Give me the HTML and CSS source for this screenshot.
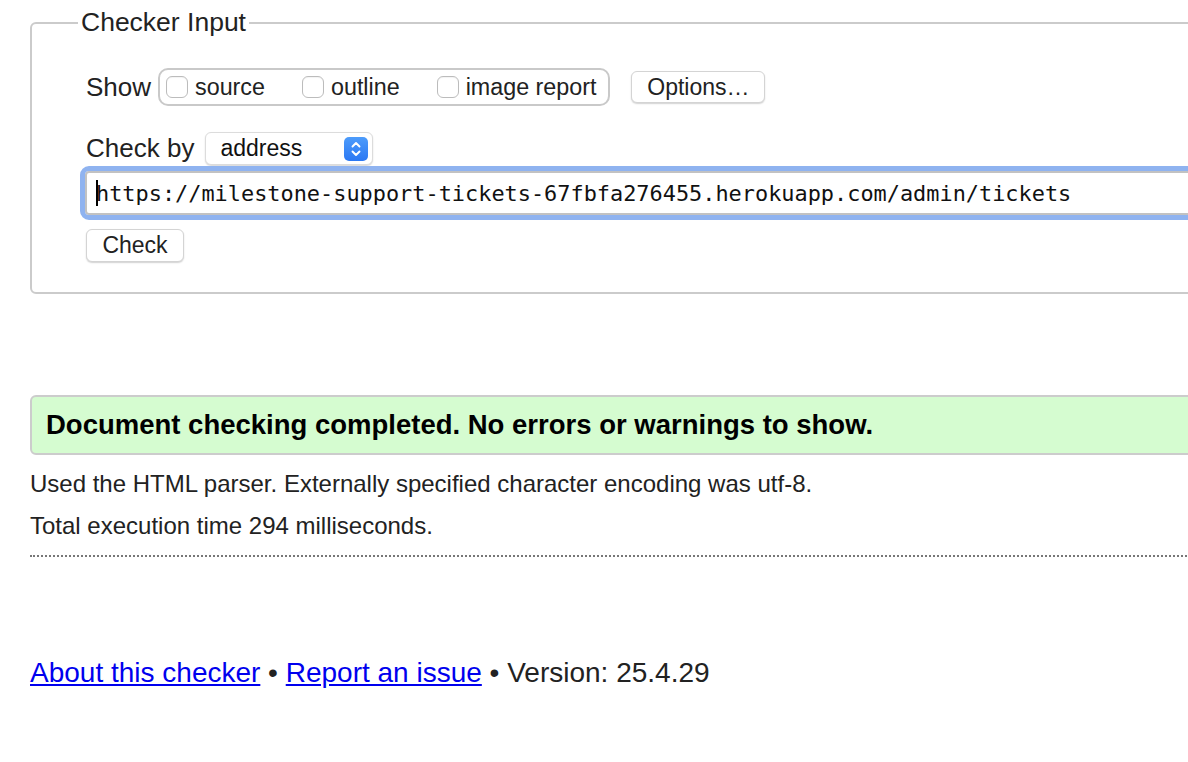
FILE: index.html
```html
<!DOCTYPE html>
<html lang="en">
<head>
<meta charset="utf-8">
<title>Nu Html Checker</title>
<link rel="stylesheet" href="styles.css">
</head>
<body>
<div class="page">
  <fieldset class="checker">
    <legend>Checker Input</legend>
    <div class="row show-row">
      <span class="label show-label">Show</span>
      <div class="opts">
        <label class="opt"><span class="box"></span>source</label>
        <label class="opt"><span class="box"></span>outline</label>
        <label class="opt"><span class="box"></span>image report</label>
      </div>
      <button class="btn options">Options…</button>
    </div>
    <div class="row checkby-row">
      <span class="label checkby-label">Check by</span>
      <div class="select">
        <span class="select-text">address</span>
        <svg class="stepper" width="24" height="24" viewBox="0 0 24 24">
          <defs>
            <linearGradient id="sg" x1="0" y1="0" x2="0" y2="1">
              <stop offset="0" stop-color="#4d9cfb"/>
              <stop offset="1" stop-color="#2b78f3"/>
            </linearGradient>
          </defs>
          <rect x="0" y="0" width="24" height="24" rx="5" fill="url(#sg)"/>
          <path d="M8.5 9.5 L12 6 L15.5 9.5" fill="none" stroke="#fff" stroke-width="1.9" stroke-linecap="round" stroke-linejoin="round"/>
          <path d="M8.5 14.5 L12 18 L15.5 14.5" fill="none" stroke="#fff" stroke-width="1.9" stroke-linecap="round" stroke-linejoin="round"/>
        </svg>
      </div>
    </div>
    <div class="url"><span class="caret"></span>https://milestone-support-tickets-67fbfa276455.herokuapp.com/admin/tickets</div>
    <button class="btn check">Check</button>
  </fieldset>

  <div class="success">Document checking completed. No errors or warnings to show.</div>
  <p class="info">Used the HTML parser. Externally specified character encoding was utf-8.</p>
  <p class="info">Total execution time 294 milliseconds.</p>
  <hr class="sep">

  <div class="footer"><a href="#">About this checker</a> • <a href="#">Report an issue</a> • Version: 25.4.29</div>
</div>
</body>
</html>
```
FILE: styles.css
```css
html, body {
  margin: 0;
  padding: 0;
  overflow: hidden;
  background: #fff;
}

body {
  font-family: "Liberation Sans", Arial, Helvetica, sans-serif;
  color: #222;
}

.page {
  width: 1300px;
  padding: 7px 0 0 30px;
}

.checker {
  margin: 0;
  border: 2px solid #cbcbcb;
  border-radius: 6px;
  padding: 0 0 30px 54px;
  min-width: 0;
}

.checker legend {
  font-size: 26.5px;
  padding: 0 3px;
  margin-left: -8px;
  color: #222;
}

.row {
  display: flex;
  align-items: center;
}

.label {
  font-size: 26px;
  color: #222;
}

.show-row {
  margin-top: 30px;
  height: 38px;
}

.show-label {
  margin-right: 7px;
}

.opts {
  display: flex;
  align-items: center;
  gap: 37px;
  height: 38px;
  box-sizing: border-box;
  border: 2px solid #c9c9c9;
  border-radius: 10px;
  padding: 0 12px 0 6px;
}

.opt {
  display: flex;
  align-items: center;
  font-size: 23.3px;
  color: #222;
}

.box {
  width: 22px;
  height: 22px;
  box-sizing: border-box;
  border: 1px solid #bcbcbc;
  border-radius: 6px;
  background: #fff;
  margin-right: 7px;
  box-shadow: inset 0 1px 1px rgba(0, 0, 0, 0.05);
}

.btn {
  font-family: "Liberation Sans", Arial, Helvetica, sans-serif;
  font-size: 23px;
  color: #222;
  background: #fff;
  border: 1px solid #d4d4d4;
  border-radius: 6px;
  box-shadow: 0 1px 1.5px rgba(0, 0, 0, 0.18);
  padding: 0;
  display: flex;
  align-items: center;
  justify-content: center;
  box-sizing: border-box;
}

.options {
  margin-left: 21px;
  width: 134px;
  height: 32px;
}

.checkby-row {
  margin-top: 26px;
  height: 33px;
}

.checkby-label {
  margin-right: 11px;
}

.select {
  width: 168px;
  height: 33px;
  box-sizing: border-box;
  display: flex;
  align-items: center;
  justify-content: space-between;
  padding: 0 4px 0 14px;
  background: #fff;
  border: 1px solid #dcdcdc;
  border-radius: 6px;
  box-shadow: 0 1px 1.5px rgba(0, 0, 0, 0.16);
}

.select-text {
  font-size: 23px;
  color: #111;
}

.stepper {
  display: block;
}

.url {
  margin-top: 6px;
  margin-left: -1px;
  width: 1150px;
  height: 44px;
  box-sizing: border-box;
  border: 2px solid #c2c2c2;
  border-radius: 4px;
  outline: 5px solid #8fb3f0;
  outline-offset: 0;
  padding: 0 0 0 9px;
  display: flex;
  align-items: center;
  font-family: "DejaVu Sans Mono", Menlo, monospace;
  font-size: 21.9px;
  color: #111;
  white-space: nowrap;
}

.caret {
  display: inline-block;
  width: 2px;
  height: 26px;
  background: #000;
  margin-right: -2px;
  position: relative;
  z-index: 1;
}

.check {
  margin-top: 14px;
  width: 98px;
  height: 33px;
}

.success {
  margin-top: 101px;
  height: 60px;
  box-sizing: border-box;
  border: 2px solid #cccccc;
  border-radius: 6px;
  background: #d5fcd0;
  display: flex;
  align-items: center;
  padding-left: 14px;
  font-size: 27.5px;
  font-weight: bold;
  color: #000;
}

.info {
  font-size: 24px;
  line-height: 28px;
  margin: 15px 0 0;
  color: #222;
}

.info + .info {
  margin-top: 14px;
}

.sep {
  margin: 15px 0 0;
  border: 0;
  border-top: 2px dotted #777;
  height: 0;
}

.footer {
  margin-top: 100px;
  font-size: 28px;
  line-height: 32px;
  color: #222;
}

.footer a {
  color: #0000ee;
  text-decoration: underline;
  text-underline-offset: 2px;
}
```
